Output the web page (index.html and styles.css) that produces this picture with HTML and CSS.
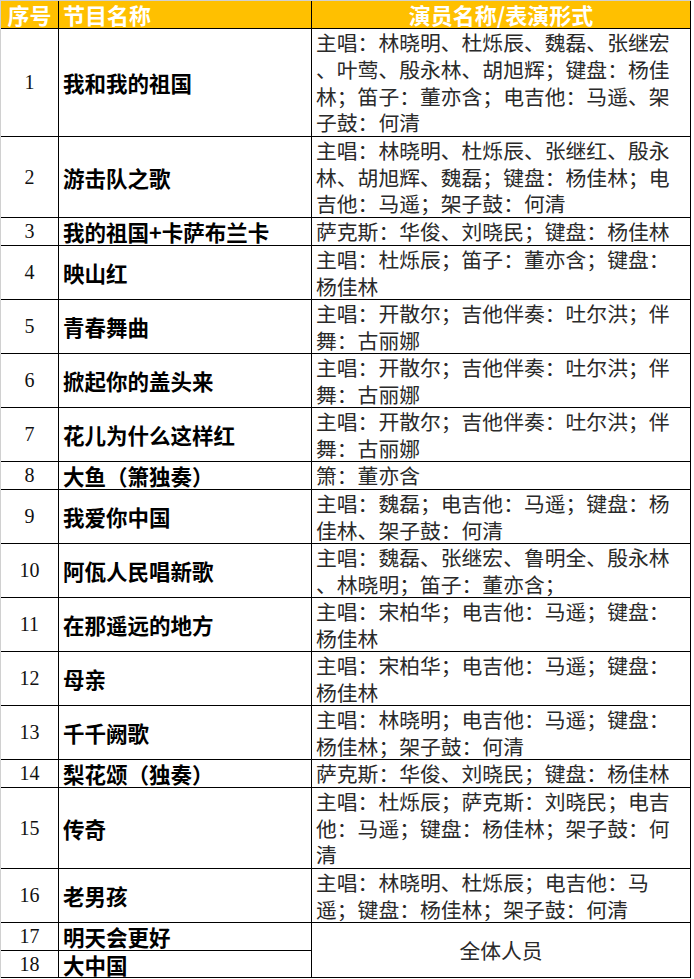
FILE: index.html
```html
<!DOCTYPE html>
<html lang="zh-CN">
<head>
<meta charset="utf-8">
<title>节目单</title>
<link rel="stylesheet" href="styles.css">
</head>
<body>
<div class="sheet">
  <div class="hd c1">序号</div>
  <div class="hd c2">节目名称</div>
  <div class="hd c3">演员名称/表演形式</div>

  <div class="num">1</div>
  <div class="name">我和我的祖国</div>
  <div class="cast">主唱：林晓明、杜烁辰、魏磊、张继宏<br>、叶莺、殷永林、胡旭辉；键盘：杨佳<br>林；笛子：董亦含；电吉他：马遥、架<br>子鼓：何清</div>

  <div class="num">2</div>
  <div class="name">游击队之歌</div>
  <div class="cast">主唱：林晓明、杜烁辰、张继红、殷永<br>林、胡旭辉、魏磊；键盘：杨佳林；电<br>吉他：马遥；架子鼓：何清</div>

  <div class="num">3</div>
  <div class="name">我的祖国+卡萨布兰卡</div>
  <div class="cast">萨克斯：华俊、刘晓民；键盘：杨佳林</div>

  <div class="num">4</div>
  <div class="name">映山红</div>
  <div class="cast">主唱：杜烁辰；笛子：董亦含；键盘：<br>杨佳林</div>

  <div class="num">5</div>
  <div class="name">青春舞曲</div>
  <div class="cast">主唱：开散尔；吉他伴奏：吐尔洪；伴<br>舞：古丽娜</div>

  <div class="num">6</div>
  <div class="name">掀起你的盖头来</div>
  <div class="cast">主唱：开散尔；吉他伴奏：吐尔洪；伴<br>舞：古丽娜</div>

  <div class="num">7</div>
  <div class="name">花儿为什么这样红</div>
  <div class="cast">主唱：开散尔；吉他伴奏：吐尔洪；伴<br>舞：古丽娜</div>

  <div class="num">8</div>
  <div class="name">大鱼（箫独奏）</div>
  <div class="cast">箫：董亦含</div>

  <div class="num">9</div>
  <div class="name">我爱你中国</div>
  <div class="cast">主唱：魏磊；电吉他：马遥；键盘：杨<br>佳林、架子鼓：何清</div>

  <div class="num">10</div>
  <div class="name">阿佤人民唱新歌</div>
  <div class="cast">主唱：魏磊、张继宏、鲁明全、殷永林<br>、林晓明；笛子：董亦含；</div>

  <div class="num">11</div>
  <div class="name">在那遥远的地方</div>
  <div class="cast">主唱：宋柏华；电吉他：马遥；键盘：<br>杨佳林</div>

  <div class="num">12</div>
  <div class="name">母亲</div>
  <div class="cast">主唱：宋柏华；电吉他：马遥；键盘：<br>杨佳林</div>

  <div class="num">13</div>
  <div class="name">千千阙歌</div>
  <div class="cast">主唱：林晓明；电吉他：马遥；键盘：<br>杨佳林；架子鼓：何清</div>

  <div class="num">14</div>
  <div class="name">梨花颂（独奏）</div>
  <div class="cast">萨克斯：华俊、刘晓民；键盘：杨佳林</div>

  <div class="num">15</div>
  <div class="name">传奇</div>
  <div class="cast">主唱：杜烁辰；萨克斯：刘晓民；电吉<br>他：马遥；键盘：杨佳林；架子鼓：何<br>清</div>

  <div class="num">16</div>
  <div class="name">老男孩</div>
  <div class="cast">主唱：林晓明、杜烁辰；电吉他：马<br>遥；键盘：杨佳林；架子鼓：何清</div>

  <div class="num">17</div>
  <div class="name">明天会更好</div>
  <div class="cast all">全体人员</div>

  <div class="num">18</div>
  <div class="name">大中国</div>
</div>
</body>
</html>
```

FILE: styles.css
```css
html, body {
  margin: 0;
  padding: 0;
  background: #ffffff;
}

.sheet {
  display: grid;
  width: 691px;
  box-sizing: border-box;
  grid-template-columns: 57px 252px 378px;
  grid-template-rows: 27px 107px 80px 27px 53px 53px 53px 53px 27px 53px 53px 53px 53px 53px 27px 80px 53px 27px 26px;
  gap: 1px;
  padding: 0 1px 1px 0;
  background: #000000;
  border-left: 1px solid #d0d0d0;
  border-top: 1px solid #d0d0d0;
  font-family: "Noto Sans CJK SC", "Noto Sans", sans-serif;
}

.sheet > div {
  background: #ffffff;
  display: flex;
  align-items: center;
  white-space: nowrap;
  overflow: visible;
}

.hd {
  background: #ffc000 !important;
  color: #ffffff;
  font-weight: bold;
  font-size: 22px;
  line-height: 27px;
}

.hd.c1 {
  justify-content: center;
  letter-spacing: 0;
}

.hd.c2 {
  padding-left: 4px;
}

.hd.c3 {
  justify-content: center;
}

.num {
  justify-content: center;
  font-family: "Liberation Serif", "Times New Roman", serif;
  font-size: 20px;
  color: #111111;
}

.name {
  padding-left: 4px;
  font-weight: bold;
  font-size: 21.5px;
  color: #000000;
}

.cast {
  padding-left: 4px;
  font-size: 20.8px;
  line-height: 26.7px;
  color: #2a2a2a;
}

.cast.all {
  grid-row: span 2;
  justify-content: center;
  padding-left: 0;
}
```
